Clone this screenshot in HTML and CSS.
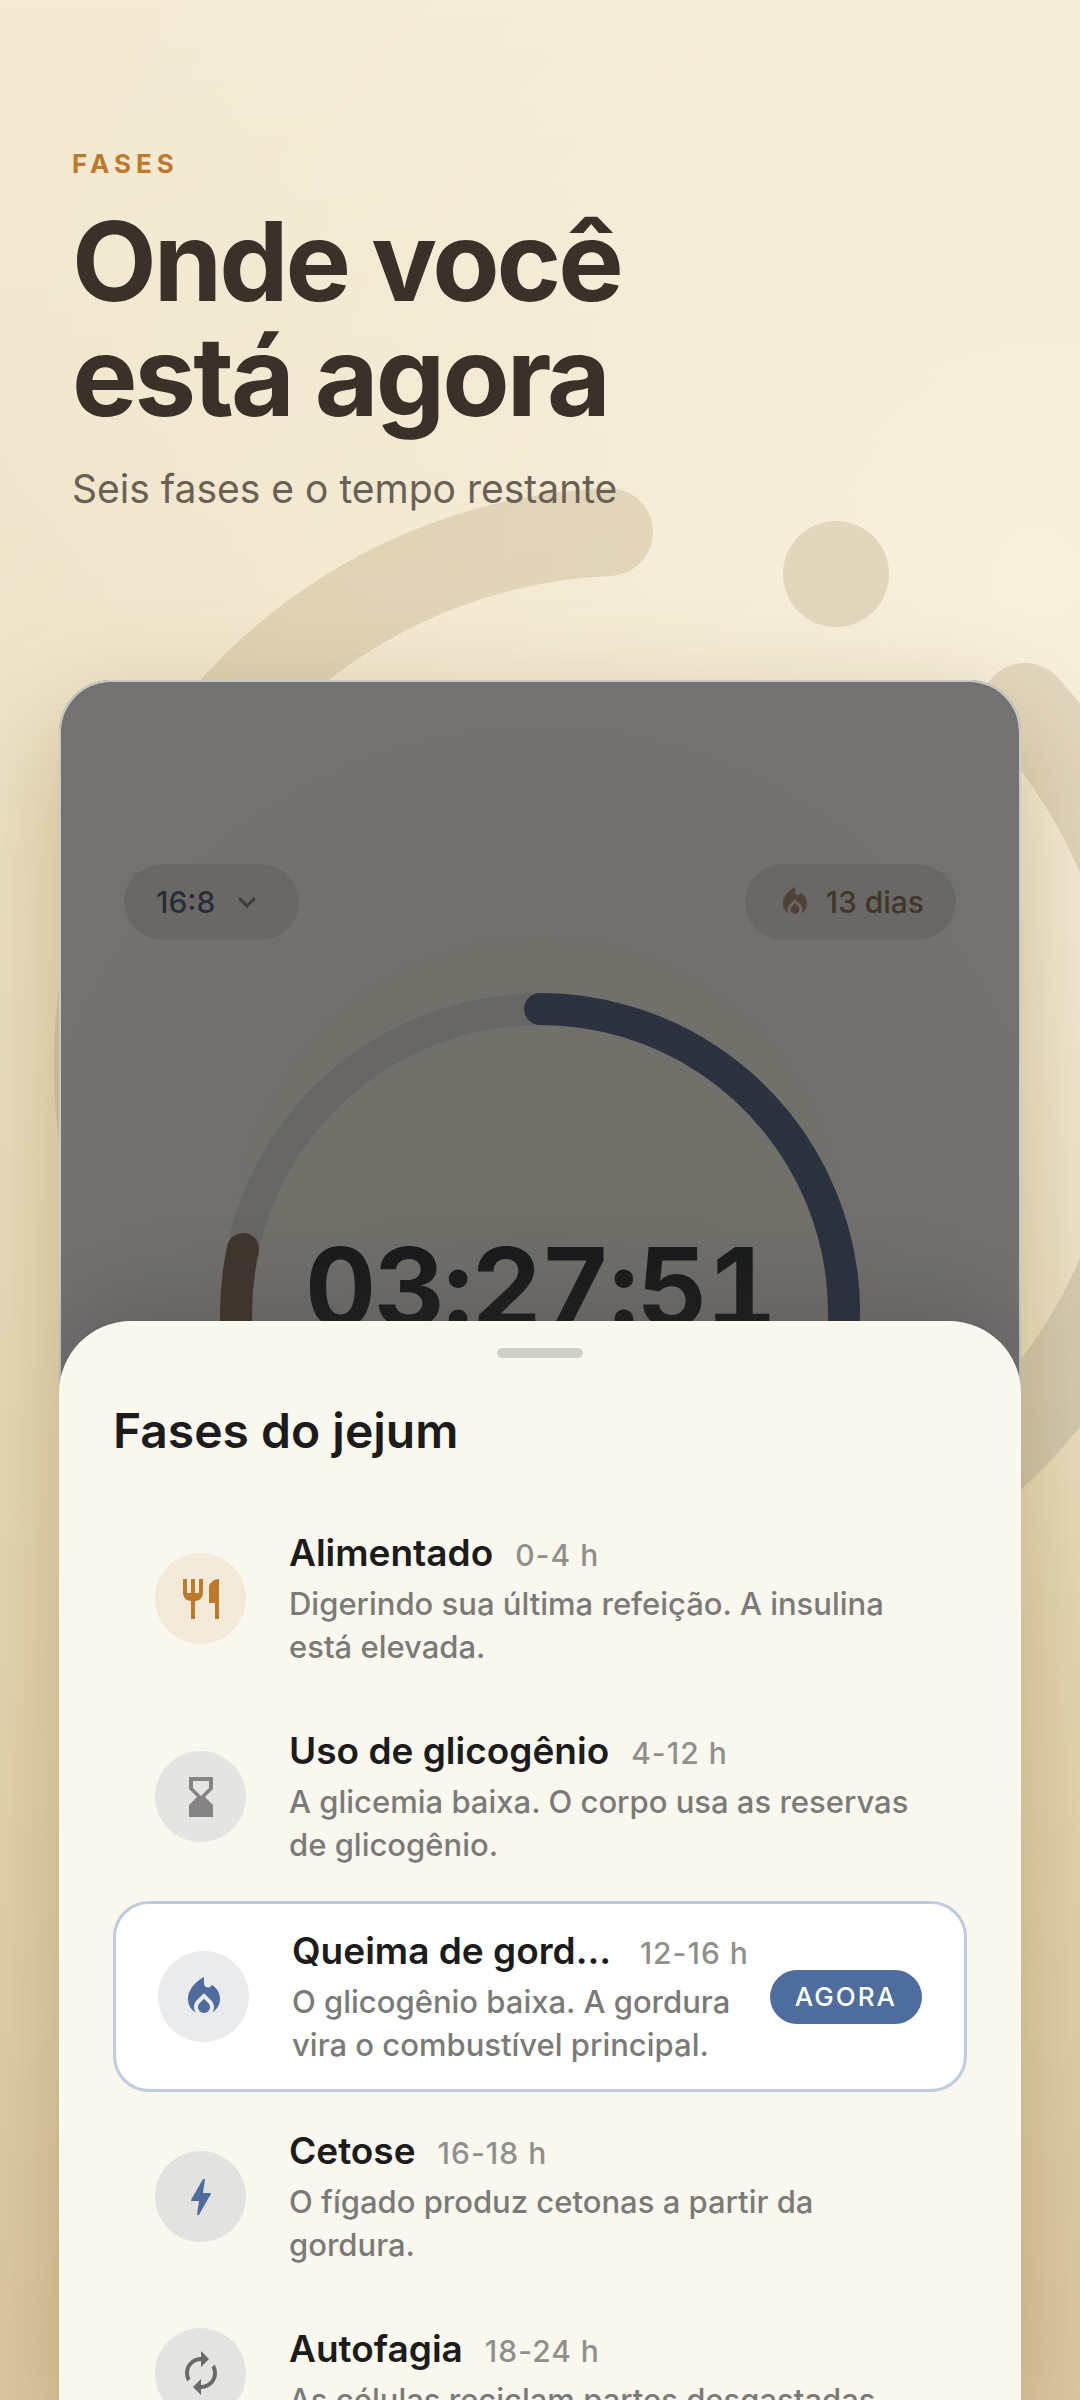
FILE: index.html
```html
<!DOCTYPE html>
<html lang="pt-BR">
<head>
<meta charset="utf-8">
<meta name="viewport" content="width=device-width, initial-scale=1">
<title>Fases do jejum</title>
<link rel="stylesheet" href="styles.css">
</head>
<body>
<main class="page">
  <svg class="backdrop" viewBox="0 0 1080 2400" preserveAspectRatio="xMidYMin slice" aria-hidden="true">
    <defs>
      <linearGradient id="arc-tint" gradientUnits="userSpaceOnUse" x1="0" y1="500" x2="0" y2="1500">
        <stop offset="0" stop-color="#94753c"/>
        <stop offset="0.4" stop-color="#8a744c"/>
        <stop offset="1" stop-color="#6a6c70"/>
      </linearGradient>
    </defs>
    <g class="backdrop-arc">
      <path d="M609 532 A533 533 0 0 0 364 1526"/>
      <path d="M1025 707 A533 533 0 0 1 850 1551"/>
    </g>
    <circle class="backdrop-dot" cx="836" cy="574" r="53"/>
  </svg>

  <header class="hero">
    <p class="eyebrow">FASES</p>
    <h1 class="headline">Onde você<br>está agora</h1>
    <p class="tagline">Seis fases e o tempo restante</p>
  </header>

  <div class="phone">
    <div class="device">
      <section class="screen" aria-label="Jejum atual">
        <div class="toolbar">
          <button class="pill pill-plan" type="button">16:8
            <svg class="pill-icon" viewBox="0 0 24 24" aria-hidden="true"><path d="M16.59 8.59 12 13.17 7.41 8.59 6 10l6 6 6-6z"/></svg>
          </button>
          <button class="pill pill-streak" type="button">
            <svg class="pill-icon" viewBox="0 0 24 24" aria-hidden="true"><path d="M16 6l-.44.55C14.38 8.02 12 7.19 12 5.3V2S4 6 4 13c0 2.92 1.56 5.47 3.89 6.86-.56-.79-.89-1.76-.89-2.8 0-1.32.52-2.56 1.47-3.5L12 10.1l3.53 3.47c.95.93 1.47 2.17 1.47 3.5 0 1.02-.31 1.96-.85 2.75 1.89-1.15 3.29-3.06 3.71-5.3.66-3.55-1.07-6.9-3.86-8.52zM12 12.9l-2.13 2.09c-.56.56-.87 1.29-.87 2.07C9 18.68 10.35 20 12 20s3-1.32 3-2.94c0-.78-.31-1.52-.87-2.07L12 12.9z"/></svg>
            13 dias</button>
        </div>
        <div class="dial">
          <svg class="dial-ring" viewBox="0 0 640 640" aria-hidden="true">
            <circle class="ring-track" cx="320" cy="320" r="304"/>
            <path class="ring-goal" d="M23 256 A304 304 0 0 0 105 535"/>
            <path class="ring-progress" d="M320 16 A304 304 0 0 1 535 535"/>
          </svg>
          <p class="timer">03:27:51</p>
        </div>
      </section>

      <section class="sheet" aria-labelledby="sheet-title">
        <div class="handle"></div>
        <h2 class="sheet-title" id="sheet-title">Fases do jejum</h2>
        <ul class="phases">
          <li class="phase">
            <span class="badge badge-amber"><svg viewBox="0 0 24 24" aria-hidden="true"><path d="M16 6v8h3v8h2V2c-2.76 0-5 2.24-5 4zm-5 3H9V2H7v7H5V2H3v7c0 2.21 1.79 4 4 4v9h2v-9c2.21 0 4-1.79 4-4V2h-2v7z"/></svg></span>
            <div class="phase-text">
              <div class="phase-head"><h3 class="phase-name">Alimentado</h3><span class="phase-range">0-4 h</span></div>
              <p class="phase-desc">Digerindo sua última refeição. A insulina está elevada.</p>
            </div>
          </li>
          <li class="phase">
            <span class="badge badge-gray"><svg viewBox="0 0 24 24" aria-hidden="true"><path d="M18 22l-.01-6L14 12l3.99-4.01L18 2H6v6l4 4-4 3.99V22h12zM8 7.5V4h8v3.5l-4 4-4-4z"/></svg></span>
            <div class="phase-text">
              <div class="phase-head"><h3 class="phase-name">Uso de glicogênio</h3><span class="phase-range">4-12 h</span></div>
              <p class="phase-desc">A glicemia baixa. O corpo usa as reservas de glicogênio.</p>
            </div>
          </li>
          <li class="phase phase-current" aria-current="step">
            <span class="badge badge-light"><svg viewBox="0 0 24 24" aria-hidden="true"><path d="M16 6l-.44.55C14.38 8.02 12 7.19 12 5.3V2S4 6 4 13c0 2.92 1.56 5.47 3.89 6.86-.56-.79-.89-1.76-.89-2.8 0-1.32.52-2.56 1.47-3.5L12 10.1l3.53 3.47c.95.93 1.47 2.17 1.47 3.5 0 1.02-.31 1.96-.85 2.75 1.89-1.15 3.29-3.06 3.71-5.3.66-3.55-1.07-6.9-3.86-8.52zM12 12.9l-2.13 2.09c-.56.56-.87 1.29-.87 2.07C9 18.68 10.35 20 12 20s3-1.32 3-2.94c0-.78-.31-1.52-.87-2.07L12 12.9z"/></svg></span>
            <div class="phase-text">
              <div class="phase-head"><h3 class="phase-name">Queima de gordura</h3><span class="phase-range">12-16 h</span></div>
              <p class="phase-desc">O glicogênio baixa. A gordura vira o combustível principal.</p>
            </div>
            <span class="now">AGORA</span>
          </li>
          <li class="phase">
            <span class="badge badge-blue"><svg viewBox="0 0 24 24" aria-hidden="true"><path d="M11 21h-1l1-7H7.5c-.58 0-.57-.32-.38-.66.19-.34.05-.08.07-.12C8.48 10.94 10.42 7.54 13 3h1l-1 7h3.5c.49 0 .56.33.47.51l-.07.15C12.96 17.55 11 21 11 21z"/></svg></span>
            <div class="phase-text">
              <div class="phase-head"><h3 class="phase-name">Cetose</h3><span class="phase-range">16-18 h</span></div>
              <p class="phase-desc">O fígado produz cetonas a partir da gordura.</p>
            </div>
          </li>
          <li class="phase">
            <span class="badge badge-dark"><svg viewBox="0 0 24 24" aria-hidden="true"><path d="M12 6v3l4-4-4-4v3c-4.42 0-8 3.58-8 8 0 1.57.46 3.03 1.24 4.26L6.7 14.8c-.45-.83-.7-1.79-.7-2.8 0-3.31 2.69-6 6-6zm6.76 1.74L17.3 9.2c.44.84.7 1.79.7 2.8 0 3.31-2.69 6-6 6v-3l-4 4 4 4v-3c4.42 0 8-3.58 8-8 0-1.57-.46-3.03-1.24-4.26z"/></svg></span>
            <div class="phase-text">
              <div class="phase-head"><h3 class="phase-name">Autofagia</h3><span class="phase-range">18-24 h</span></div>
              <p class="phase-desc">As células reciclam partes desgastadas.</p>
            </div>
          </li>
        </ul>
      </section>
    </div>
  </div>
</main>
</body>
</html>
```
FILE: styles.css
```css
* {
  box-sizing: border-box;
}

body,
h1,
h2,
h3,
p,
ul {
  margin: 0;
  padding: 0;
}

body {
  font-family: Inter, "Liberation Sans", sans-serif;
  color: #1b1c1b;
}

.page {
  position: relative;
  display: flex;
  flex-direction: column;
  height: 100vh;
  overflow: hidden;
  background:
    radial-gradient(circle at 96% 24%, #f8efdd 0, rgba(248, 239, 221, 0) 50%),
    linear-gradient(180deg, #f4ead4 0%, #f0e5ca 25%, #ebdfc3 45%, #e3d4b1 75%, #dcc8a2 100%);
}

.backdrop {
  position: absolute;
  inset: 0;
  width: 100%;
  height: 100%;
}

.backdrop-arc {
  fill: none;
  stroke: url(#arc-tint);
  stroke-opacity: 0.19;
  stroke-width: 88;
  stroke-linecap: round;
}

.backdrop-dot {
  fill: #e2d6bd;
  stroke: none;
}

.hero {
  position: relative;
  padding: 148px 72px 0;
}

.eyebrow {
  font-size: 26px;
  line-height: 32px;
  font-weight: 700;
  letter-spacing: 5px;
  color: #bd7a2c;
}

.headline {
  margin-top: 24px;
  font-size: 110px;
  line-height: 115px;
  font-weight: 700;
  letter-spacing: -3px;
  color: #3b3129;
}

.tagline {
  margin-top: 31px;
  font-size: 39px;
  line-height: 48px;
  color: #696156;
}

.phone {
  position: relative;
  flex: 1;
  display: grid;
  min-height: 0;
  margin-top: 167px;
  padding: 0 59px;
}

.device {
  display: grid;
  grid-template-columns: minmax(0, 1fr);
  min-height: 0;
  border-radius: 52px 52px 0 0;
  box-shadow: 0 40px 110px rgba(140, 112, 44, 0.4);
}

.screen,
.sheet {
  grid-area: 1 / 1;
}

.screen {
  height: 760px;
  padding: 184px 65px 0;
  overflow: hidden;
  border-radius: 52px 52px 0 0;
  background: radial-gradient(circle at 50% 560px, #706e69 0, #71706b 300px, #737270 520px);
  box-shadow: inset 0 0 0 2px #c8cac9;
}

.toolbar {
  display: flex;
  justify-content: space-between;
}

.pill {
  display: flex;
  align-items: center;
  gap: 12px;
  height: 76px;
  padding: 0 32px;
  border: 0;
  border-radius: 38px;
  background: #6a6864;
  font: 500 30px/36px Inter, "Liberation Sans", sans-serif;
}

.pill-plan {
  gap: 14px;
  padding-right: 34px;
  color: #272d3a;
}

.pill-streak {
  color: #42362b;
}

.pill-icon {
  width: 36px;
  height: 36px;
  fill: #3f3e3d;
}

.pill-streak .pill-icon {
  fill: #4f4338;
}

.dial {
  display: grid;
  justify-items: center;
  margin: 53px -65px 0;
}

.dial-ring,
.timer {
  grid-area: 1 / 1;
}

.dial-ring {
  width: 640px;
  height: 640px;
}

.ring-track,
.ring-goal,
.ring-progress {
  fill: none;
  stroke-width: 32;
  stroke-linecap: round;
}

.ring-track {
  stroke: #686766;
}

.ring-goal {
  stroke: #40372c;
}

.ring-progress {
  stroke: #2b3240;
}

.timer {
  align-self: start;
  margin-top: 228px;
  font-size: 110px;
  line-height: 133px;
  font-weight: 700;
  letter-spacing: -2px;
  font-variant-numeric: tabular-nums;
  color: #1a1c1b;
}

.sheet {
  position: relative;
  margin-top: 641px;
  padding: 27px 54px 0;
  border-radius: 72px 72px 0 0;
  background: #faf7ef;
  box-shadow: 0 -10px 90px rgba(60, 50, 60, 0.3);
  clip-path: inset(-120px 0 0 0);
}

.handle {
  width: 86px;
  height: 10px;
  margin: 0 auto;
  border-radius: 5px;
  background: #cfcfca;
}

.sheet-title {
  margin-top: 44px;
  font-size: 48px;
  line-height: 58px;
  font-weight: 600;
}

.phases {
  display: flex;
  flex-direction: column;
  gap: 11px;
  margin-top: 45px;
  list-style: none;
}

.phase {
  display: flex;
  align-items: center;
  padding: 24px 42px;
  border-radius: 36px;
}

.phase-current {
  padding: 23px 42px;
  border: 3px solid #bfcbdf;
  background: #fff;
}

.badge {
  display: grid;
  place-items: center;
  flex: none;
  width: 91px;
  height: 91px;
  margin-right: 43px;
  border-radius: 50%;
}

.badge svg {
  width: 48px;
  height: 48px;
  fill: currentColor;
}

.badge-amber {
  background: #f2e9d8;
  color: #bd7a2c;
}

.badge-gray {
  background: #e4e4e1;
  color: #878283;
}

.badge-light {
  background: #eaebed;
  color: #4f6c9f;
}

.badge-blue {
  background: #e2e2df;
  color: #4f6c9f;
}

.badge-dark {
  background: #e3e3df;
  color: #6a6a6a;
}

.phase-text {
  flex: 1;
  min-width: 0;
}

.phase-head {
  display: flex;
  align-items: baseline;
  gap: 22px;
}

.phase-name {
  overflow: hidden;
  font-size: 37px;
  line-height: 48px;
  font-weight: 600;
  text-overflow: ellipsis;
  white-space: nowrap;
}

.phase-range {
  flex: none;
  font-size: 30px;
  line-height: 36px;
  font-weight: 500;
  letter-spacing: 1px;
  color: #8f908c;
}

.phase-desc {
  margin-top: 5px;
  font-size: 31px;
  line-height: 43px;
  font-weight: 500;
  color: #7a7b78;
}

.now {
  flex: none;
  margin-left: 21px;
  padding: 0 25px;
  border-radius: 27px;
  background: #4f6c9f;
  font-size: 26px;
  line-height: 54px;
  font-weight: 500;
  letter-spacing: 2px;
  color: #fff;
}
```
